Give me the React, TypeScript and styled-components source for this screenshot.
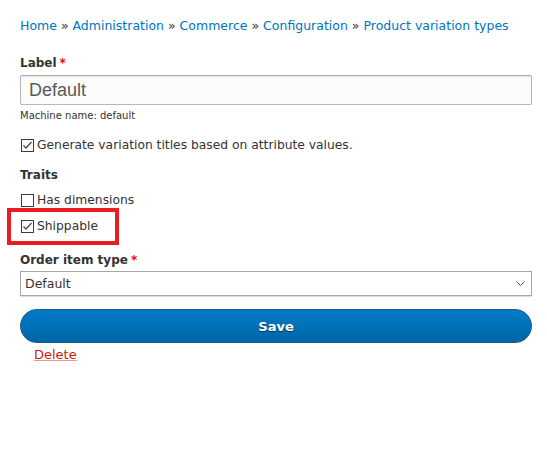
import React from "react";
import styled, { createGlobalStyle } from "styled-components";

const Global = createGlobalStyle`
  html, body { margin: 0; padding: 0; background: #ffffff; }
  body { font-family: "DejaVu Sans", Verdana, sans-serif; color: #333333; }
  * { box-sizing: border-box; }
`;

const Page = styled.div`
  width: 547px;
  height: 460px;
  padding: 17px 15px 0 20px;
  display: flex;
  flex-direction: column;
`;

const Breadcrumb = styled.nav`
  font-size: 12.5px;
  line-height: 18px;
  height: 18px;
  color: #0074bd;
  white-space: nowrap;
`;

const Crumb = styled.a`
  color: #0074bd;
  text-decoration: none;
`;

const Sep = styled.span`
  color: #333333;
`;

const FieldLabel = styled.div<{ $mt: number }>`
  margin-top: ${(p) => p.$mt}px;
  font-size: 12px;
  font-weight: bold;
  line-height: 18px;
  color: #333333;
`;

const Req = styled.span`
  color: #e00c00;
  margin-left: 3px;
`;

const TextInput = styled.div`
  margin-top: 3px;
  height: 30px;
  border: 1px solid #b8b8b8;
  border-top-color: #a8a8a8;
  border-radius: 2px;
  background: #fcfcfa;
  box-shadow: inset 0 1px 2px rgba(0, 0, 0, 0.1);
  font-family: "Liberation Sans", Arial, sans-serif;
  font-size: 18px;
  color: #595959;
  padding-left: 8px;
  display: flex;
  align-items: center;
`;

const Description = styled.div`
  margin-top: 4px;
  font-size: 10px;
  line-height: 14px;
  color: #333333;
`;

const Option = styled.div<{ $mt?: number }>`
  margin-top: ${(p) => p.$mt ?? 0}px;
  display: flex;
  align-items: center;
  gap: 3px;
  font-size: 12.3px;
  line-height: 18px;
  color: #333333;
`;

const Highlighted = styled.div`
  position: relative;
  margin-top: 8px;
`;

const Annotation = styled.div`
  position: absolute;
  left: -13px;
  top: -9px;
  width: 112px;
  height: 37px;
  border: 4px solid #ec1c24;
  pointer-events: none;
`;

const Box = styled.svg`
  flex: none;
  display: block;
`;

const Check = ({ checked }: { checked: boolean }) => (
  <Box width="14" height="14" viewBox="0 0 14 14">
    <rect x="1.5" y="1.5" width="12" height="12" fill="#ffffff" stroke="#3d3d3d" strokeWidth="1" />
    {checked && (
      <polyline points="3.5,7.5 6,10 11.5,4" fill="none" stroke="#4a4a4a" strokeWidth="1.3" />
    )}
  </Box>
);

const Select = styled.div`
  margin-top: 2px;
  height: 25px;
  border: 1px solid #a6a6a6;
  background: #ffffff;
  box-shadow: 0 1px 1px rgba(0, 0, 0, 0.12);
  display: flex;
  align-items: center;
  justify-content: space-between;
  padding: 0 6px 0 4px;
  font-size: 12.5px;
  color: #333333;
`;

const SaveButton = styled.button`
  margin-top: 13px;
  height: 34px;
  width: 512px;
  border: 1px solid #1e5c90;
  border-radius: 20px;
  background: linear-gradient(to bottom, #007bc6, #0071b8 50%, #0065a5);
  color: #ffffff;
  font-family: "DejaVu Sans", Verdana, sans-serif;
  font-weight: bold;
  font-size: 13px;
  text-shadow: 0 1px 1px rgba(0, 0, 0, 0.5);
  display: flex;
  align-items: center;
  justify-content: center;
`;

const DeleteLink = styled.a`
  margin: 3px 0 0 14px;
  align-self: flex-start;
  font-size: 13px;
  line-height: 18px;
  color: #c72100;
  text-decoration: underline;
  text-decoration-color: #e49a8c;
`;

export default function App() {
  const crumbs = ["Home", "Administration", "Commerce", "Configuration", "Product variation types"];
  return (
    <>
      <Global />
      <Page>
        <Breadcrumb>
          {crumbs.map((c, i) => (
            <React.Fragment key={c}>
              {i > 0 && <Sep> » </Sep>}
              <Crumb href="#">{c}</Crumb>
            </React.Fragment>
          ))}
        </Breadcrumb>
        <FieldLabel $mt={19}>
          Label<Req>*</Req>
        </FieldLabel>
        <TextInput>Default</TextInput>
        <Description>Machine name: default</Description>
        <Option $mt={13}>
          <Check checked />
          Generate variation titles based on attribute values.
        </Option>
        <FieldLabel $mt={12}>Traits</FieldLabel>
        <Option $mt={7}>
          <Check checked={false} />
          Has dimensions
        </Option>
        <Highlighted>
          <Option>
            <Check checked />
            Shippable
          </Option>
          <Annotation />
        </Highlighted>
        <FieldLabel $mt={16}>
          Order item type<Req>*</Req>
        </FieldLabel>
        <Select>
          <span>Default</span>
          <svg width="9" height="6" viewBox="0 0 9 6">
            <polyline points="0.5,0.5 4.5,4.5 8.5,0.5" fill="none" stroke="#555" strokeWidth="1" />
          </svg>
        </Select>
        <SaveButton>Save</SaveButton>
        <DeleteLink href="#">Delete</DeleteLink>
      </Page>
    </>
  );
}
